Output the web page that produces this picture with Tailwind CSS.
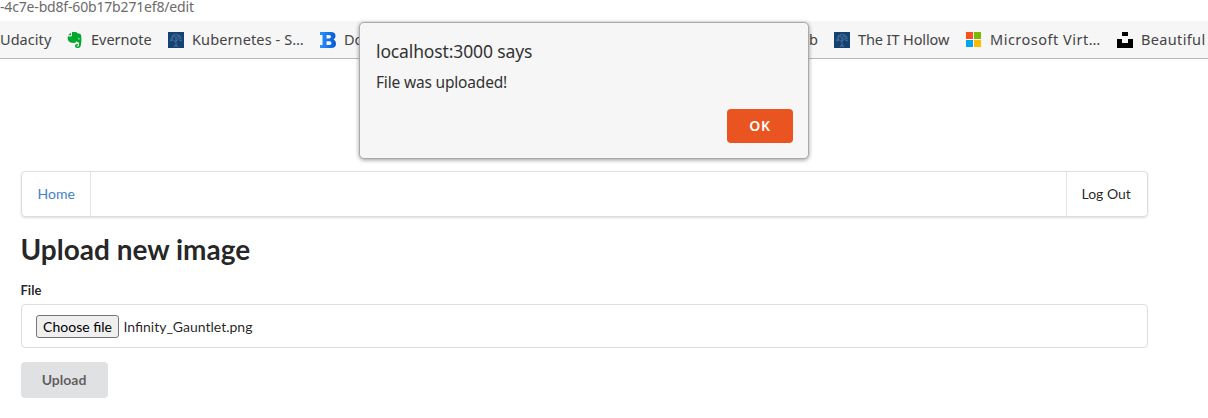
<!DOCTYPE html>
<html lang="en">
<head>
<meta charset="utf-8">
<title>Upload new image</title>
<script src="https://cdn.jsdelivr.net/npm/@tailwindcss/browser@4"></script>
</head>
<body class="relative h-[418px] overflow-hidden bg-white font-['Lato',sans-serif] text-[14px] text-black/87">
<svg class="hidden">
  <symbol id="tree" viewBox="0 0 16 16">
    <path fill="#164273" d="M0 0h16v16H0z"/>
    <path fill="none" stroke="#5c86ad" stroke-width=".8" opacity=".8" d="M8 15V7M6 15l1.500-2h1l1.500 2M8 10L4 7M8 9l4-3M8 7L6 3M8 7l2-4M2 7l2 0 0-3M4 4l2-1 2-1 2 1 2 1M12 6l2 1M12 6l1-2M2 9l3-1M14 9l-3-1M6 5L4 5M10 5l2-1"/>
  </symbol>
</svg>
<header class="font-['Noto_Sans',sans-serif]">
  <div class="h-[21px] whitespace-nowrap text-[14px] leading-[14px] tracking-[-0.17px] text-[#6b6b6b]">-4c7e-bd8f-60b17b271ef8/edit</div>
  <nav class="flex h-[38px] items-center overflow-hidden whitespace-nowrap border-b border-[#b8b8b8] bg-[#f6f6f6] text-[14.5px] leading-5 text-[#444]">
    <span class="mb-0.5 w-[67px] shrink-0 tracking-[0.05px]">Udacity</span>
    <svg class="mr-2 size-4 shrink-0" viewBox="0 0 16 16"><path fill="#00a82d" d="M5 0h3q2 0 2.400 1.300l2.500.5q1.200.3 1.300 2Q15 10 13.700 14q-.6 2-2.500 2H10q-2 0-2-2t2-2h1v1.500h-.8q-.6 0-.6.5t.7.500h.8q.9 0 .9-1.500V10.500q-2 0-2.500-1.500-.5 2-2.500 2-5 0-6-3Q.4 6.500.8 4.500H4q1 0 1-1z"/><path fill="#00a82d" d="M4 .7v2.500H1z"/><path fill="#f6f6f6" d="M11 6.500q1.500-.5 2 .8-1-.3-2 0z"/></svg>
    <span class="mb-0.5 w-[77px] shrink-0">Evernote</span>
    <svg class="mr-2 size-4 shrink-0"><use href="#tree"/></svg>
    <span class="mb-0.5 w-[128px] shrink-0 tracking-[0.12px]">Kubernetes - S…</span>
    <svg class="mr-2 size-4 shrink-0" viewBox="0 0 16 16"><defs><linearGradient id="blue"><stop stop-color="#2d91ff"/><stop offset="1" stop-color="#0059d4"/></linearGradient></defs><path fill="url(#blue)" fill-rule="evenodd" d="M0 0h11q4.500 0 4.500 4 0 2.500-2 3.500Q16 8.500 16 11.500q0 4.500-5 4.500H0v-3h2.500V3H0zM6.500 3v3.500H9q2 0 2-1.700T9 3zM6.500 9.300V13h3q2 0 2-1.800t-2-1.900z"/></svg>
    <span class="mb-0.5 w-[465px] shrink-0">Do</span>
    <span class="mb-0.5 w-[25px] shrink-0">b</span>
    <svg class="mr-2 size-4 shrink-0"><use href="#tree"/></svg>
    <span class="mb-0.5 w-[108px] shrink-0 tracking-[-0.1px]">The IT Hollow</span>
    <svg class="mr-2 size-4 shrink-0" viewBox="0 0 16 16"><path fill="#f9501d" d="M0 0h7v7H0z"/><path fill="#7eb900" d="M8 0h7v7H8z"/><path fill="#00a3f4" d="M0 8h7v7H0z"/><path fill="#ffb900" d="M8 8h7v7H8z"/></svg>
    <span class="mb-0.5 w-[127px] shrink-0 tracking-[0.5px]">Microsoft Virt…</span>
    <svg class="mr-2 size-4 shrink-0" viewBox="0 0 16 16"><path d="M5 0h6v4H5zM0 7h5v4h6V7h5v9H0z"/></svg>
    <span class="mb-0.5 shrink-0 tracking-[0.35px]">Beautiful</span>
  </nav>
</header>
<main class="ml-[21px] w-[1127px] pt-28">
  <nav class="flex h-[46px] items-stretch justify-between rounded border border-[#22242626] leading-[44px] shadow-[0_1px_2px_0_rgba(34,36,38,0.15)]">
    <a class="w-[69px] border-r border-[#22242620] pl-[15.500px] text-[#4183c4]">Home</a>
    <a class="w-[81px] border-l border-[#22242620] pl-[14.500px]">Log Out</a>
  </nav>
  <h1 class="-ml-[0.5px] mt-[14px] text-[28px] font-bold leading-9">Upload new image</h1>
  <form>
    <div class="-ml-[0.5px] mt-[14px] text-[13px] font-bold leading-[18px]">File</div>
    <div class="mt-[5px] flex h-[44px] items-center rounded border border-[#22242626] pl-[14px]">
      <button type="button" class="h-[23px] w-[83px] rounded-[3px] border border-[#767676] bg-[#efefef] leading-[21px] text-black">Choose file</button>
      <span class="ml-[4.500px]">Infinity_Gauntlet.png</span>
    </div>
    <button type="button" class="mt-[14px] h-9 w-[87px] rounded bg-[#e0e1e2] pb-0.5 pr-[1px] font-bold text-black/60">Upload</button>
  </form>
</main>
<section role="dialog" class="absolute left-[359px] top-[22px] h-[137px] w-[450px] rounded-[5px] border border-[#aaa] bg-[#f6f6f6] px-4 pt-[17px] font-['Noto_Sans',sans-serif] text-[#333] shadow-[0_1px_4px_rgba(0,0,0,0.4)]">
  <h2 class="text-[17.500px] leading-[22px] tracking-[-0.13px]">localhost:3000 says</h2>
  <p class="mt-[10px] text-[15.500px] leading-5 tracking-[-0.18px]">File was uploaded!</p>
  <div class="mt-[17px] flex justify-end"><button class="mr-[-1px] h-[34px] w-[66px] rounded-[4px] bg-[#e95420] pb-0.5 text-[14px] font-semibold tracking-[0.6px] text-white">OK</button></div>
</section>
</body>
</html>
